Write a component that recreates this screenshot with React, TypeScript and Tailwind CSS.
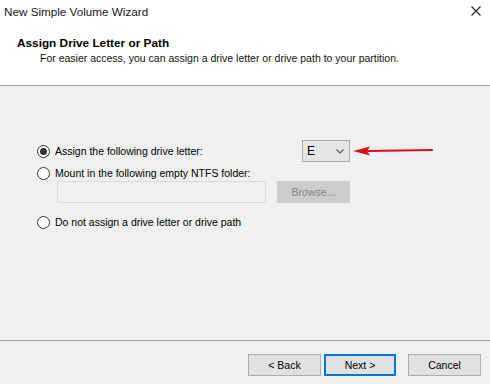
function Radio({ checked }: { checked?: boolean }) {
  return (
    <span className="flex h-[13px] w-[13px] shrink-0 items-center justify-center rounded-full border border-[#333333] bg-white">
      {checked && <span className="h-[7px] w-[7px] rounded-full bg-[#333333]" />}
    </span>
  )
}

function Button({ label, primary }: { label: string; primary?: boolean }) {
  return (
    <div
      className={
        primary
          ? 'flex h-[22px] w-[72px] items-center justify-center border-2 border-[#0078d7] bg-[#e1e1e1]'
          : 'flex h-[22px] w-[73px] items-center justify-center border border-[#adadad] bg-[#e1e1e1]'
      }
    >
      {label}
    </div>
  )
}

export default function App() {
  return (
    <div
      className="flex h-[384px] w-[490px] flex-col bg-[#f0f0f0] text-[10.5px] leading-[13px] text-black"
      style={{ fontFamily: '"Liberation Sans", Arial, sans-serif' }}
    >
      {/* title bar + header */}
      <div className="h-[86px] shrink-0 border-b border-[#a0a0a0] bg-white">
        <div className="flex h-[22px] items-center justify-between pl-[4px] pr-[9px] text-[11.7px] text-[#1a1a1a]">
          <span>New Simple Volume Wizard</span>
          <svg width="10" height="10" viewBox="0 0 10 10" className="text-[#222]">
            <path d="M0.5 0.5 L9.5 9.5 M9.5 0.5 L0.5 9.5" stroke="currentColor" strokeWidth="1.1" />
          </svg>
        </div>
        <div className="pl-[17px] pt-[15px]">
          <div className="text-[11.8px] font-bold">Assign Drive Letter or Path</div>
          <div className="pl-[23px] pt-[2px] text-[#111]">
            For easier access, you can assign a drive letter or drive path to your partition.
          </div>
        </div>
      </div>

      {/* body */}
      <div className="flex flex-1 flex-col pl-[37px] pt-[54px]">
        <div className="flex items-center">
          <div className="flex w-[265px] items-center gap-[5px]">
            <Radio checked />
            <span>Assign the following drive letter:</span>
          </div>
          <div className="flex h-[22px] w-[48px] items-center justify-between border border-[#adadad] bg-[#e5e5e5] pl-[4px] pr-[5px]">
            <span className="text-[12px]">E</span>
            <svg width="8" height="5" viewBox="0 0 8 5">
              <path d="M0.5 0.5 L4 4 L7.5 0.5" stroke="#555" strokeWidth="1.1" fill="none" />
            </svg>
          </div>
          <svg width="82" height="10" viewBox="0 0 82 10" className="ml-[2px]">
            <path d="M16 5 L80 4" stroke="#d4141a" strokeWidth="2.2" strokeLinecap="round" />
            <path d="M1 5 L18 0.5 L15 5 L18 9.5 Z" fill="#d4141a" />
          </svg>
        </div>

        <div className="mt-[5px] flex items-center gap-[5px]">
          <Radio />
          <span>Mount in the following empty NTFS folder:</span>
        </div>
        <div className="mt-[1px] flex items-center pl-[20px]">
          <div className="h-[22px] w-[209px] border border-[#d9d9d9] bg-[#f0f0f0]" />
          <div className="ml-[11px] flex h-[22px] w-[73px] items-center justify-center border border-[#cccccc] bg-[#cccccc] text-[#838383]">
            Browse...
          </div>
        </div>

        <div className="mt-[13px] flex items-center gap-[5px]">
          <Radio />
          <span>Do not assign a drive letter or drive path</span>
        </div>
      </div>

      {/* footer */}
      <div className="flex h-[44px] shrink-0 items-start border-t border-[#a0a0a0] pt-[13px] pl-[248px]">
        <Button label="< Back" />
        <div className="ml-[3px]">
          <Button label="Next >" primary />
        </div>
        <div className="ml-[12px]">
          <Button label="Cancel" />
        </div>
      </div>
    </div>
  )
}
